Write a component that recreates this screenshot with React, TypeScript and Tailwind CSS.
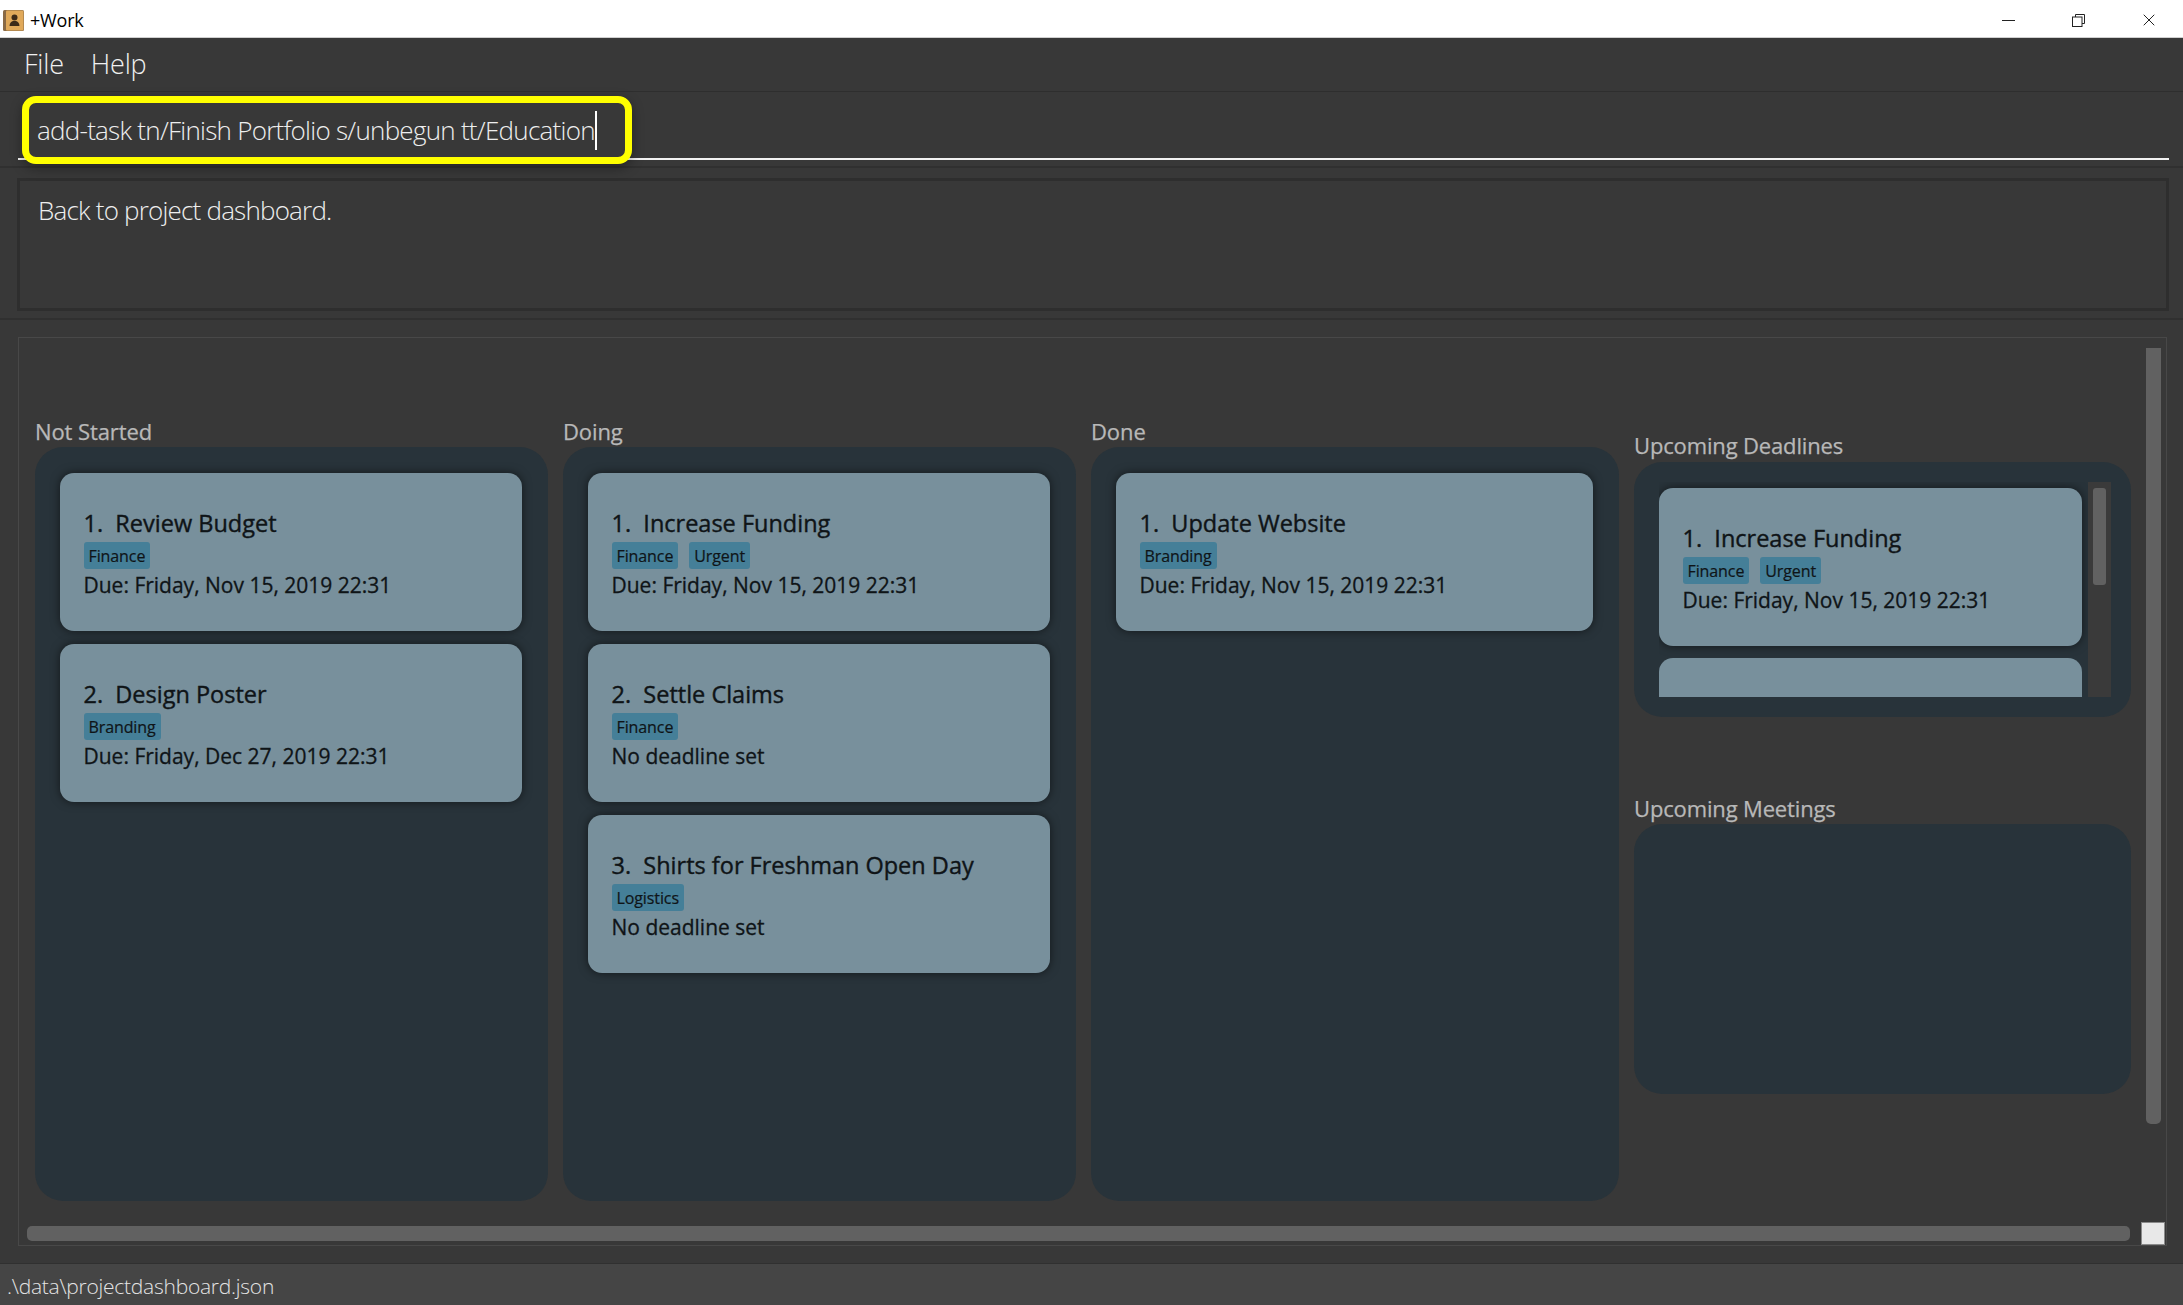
import { X } from 'lucide-react';

type Task = { title: string; tags: string[]; due: string };

const notStarted: Task[] = [
  { title: '1.  Review Budget', tags: ['Finance'], due: 'Due: Friday, Nov 15, 2019 22:31' },
  { title: '2.  Design Poster', tags: ['Branding'], due: 'Due: Friday, Dec 27, 2019 22:31' },
];

const doing: Task[] = [
  { title: '1.  Increase Funding', tags: ['Finance', 'Urgent'], due: 'Due: Friday, Nov 15, 2019 22:31' },
  { title: '2.  Settle Claims', tags: ['Finance'], due: 'No deadline set' },
  { title: '3.  Shirts for Freshman Open Day', tags: ['Logistics'], due: 'No deadline set' },
];

const done: Task[] = [
  { title: '1.  Update Website', tags: ['Branding'], due: 'Due: Friday, Nov 15, 2019 22:31' },
];

function TaskCard({ task }: { task: Task }) {
  return (
    <div className="h-[158px] shrink-0 rounded-[14px] bg-[#78909c] pl-[23.5px] pt-[34px] text-[#0f1417] shadow-[0_0_10px_rgba(0,0,0,0.55)]">
      <div className="h-8 whitespace-pre text-[23.5px] leading-8 font-medium [-webkit-text-stroke:0.4px_#0f1417]">{task.title}</div>
      <div className="mt-[3px] flex h-[27px] gap-[11px]">
        {task.tags.map((tag) => (
          <span key={tag} className="flex items-center rounded-[3px] bg-[#457f98] px-[5px] text-[16px] leading-none font-medium tracking-[-0.1px] [-webkit-text-stroke:0.2px_#0f1417]">
            {tag}
          </span>
        ))}
      </div>
      <div className="h-8 whitespace-pre text-[21px] leading-8 font-medium [-webkit-text-stroke:0.3px_#0f1417]">{task.due}</div>
    </div>
  );
}

function TaskColumn({ label, tasks, width }: { label: string; tasks: Task[]; width: string }) {
  return (
    <div className={`${width} shrink-0`}>
      <div className="h-[31px] text-[22px] leading-[30px] font-medium tracking-[-0.1px] text-[#b8b8b8] [-webkit-text-stroke:0.25px_#b8b8b8]">{label}</div>
      <div className="flex h-[754px] flex-col gap-[13px] rounded-[28px] bg-[#28333a] pb-5 pl-[25px] pr-[26px] pt-[26px]">
        {tasks.map((task) => (
          <TaskCard key={task.title} task={task} />
        ))}
      </div>
    </div>
  );
}

function AppIcon() {
  return (
    <svg viewBox="0 0 21 21" className="h-[21px] w-[21px]">
      <rect x="0" y="0" width="21" height="21" rx="1.5" fill="#8a6a45" />
      <rect x="3" y="0.5" width="17.5" height="20" rx="1" fill="#e0a95a" />
      <circle cx="11.5" cy="7.5" r="3" fill="#3c2a18" />
      <path d="M6.5 16c0-3 2-4.5 3.5-5h3c1.5.5 3.5 2 3.5 5z" fill="#3c2a18" />
    </svg>
  );
}

export default function App() {
  return (
    <div className="flex h-[1305px] w-[2183px] flex-col overflow-hidden bg-[#383838] font-['Open_Sans',sans-serif]">
      {/* window title bar */}
      <div className="flex h-[38px] shrink-0 items-center border-b border-[#d0d0d0] bg-white pl-[3px] pt-[4px] text-black">
        <AppIcon />
        <span className="ml-[6px] text-[18px] tracking-[-0.2px]">+Work</span>
        <div className="ml-auto flex items-center pb-[1px] text-[#222]">
          <svg viewBox="0 0 13 13" className="mr-[57px] h-[13px] w-[13px]">
            <path d="M0 6.5h13" stroke="currentColor" strokeWidth="1" />
          </svg>
          <svg viewBox="0 0 13 13" className="mr-[54px] h-[13px] w-[13px]" fill="none" stroke="currentColor">
            <path d="M3.5 3V.5h9v9H10" />
            <rect x="0.5" y="3" width="9.5" height="9.5" fill="#fff" />
          </svg>
          <X className="mr-[24px] h-[20px] w-[20px]" strokeWidth={1.2} />
        </div>
      </div>

      {/* menu */}
      <div className="flex h-[54px] shrink-0 items-center gap-[27px] border-b border-[#2e2e2e] pl-[24px] text-[27px] font-light tracking-[-0.2px] text-[#f0f0f0]">
        <span>File</span>
        <span>Help</span>
      </div>

      {/* command box */}
      <div className="relative h-[76px] shrink-0 border-b-2 border-[#303030] pl-[18px] pr-[14px]">
        <div className="flex h-[68px] items-center border-b-2 border-[#f2f2f2] pl-[19px] pt-[10px] text-[26px] font-light tracking-[-0.74px] text-[#eeeeee]">
          <span className="whitespace-pre">add-task tn/Finish Portfolio s/unbegun tt/Education</span>
          <span className="h-[39px] w-[2px] bg-white" />
        </div>
        <div className="absolute left-[22px] top-[4px] h-[68px] w-[610px] rounded-[14px] border-[7px] border-[#ffff00] shadow-[0_4px_12px_rgba(0,0,0,0.35)]" />
      </div>

      {/* result display */}
      <div className="h-[152px] shrink-0 border-b-2 border-[#303030] pb-2 pl-[17px] pr-[14px] pt-[10px]">
        <div className="h-[133px] border-[3px] border-[#2e2e2e] pl-[18px] pt-[9px] text-[26px] leading-10 font-light tracking-[-0.8px] text-[#eeeeee]">
          Back to project dashboard.
        </div>
      </div>

      {/* dashboard */}
      <div className="min-h-0 flex-1 pb-[17px] pl-[18px] pr-4 pt-[17px]">
        <div className="flex h-full flex-col border border-[#484848]">
          <div className="flex min-h-0 flex-1">
            <div className="flex flex-1 gap-[15px] pl-4 pt-[78px]">
              <TaskColumn label="Not Started" tasks={notStarted} width="w-[513px]" />
              <TaskColumn label="Doing" tasks={doing} width="w-[513px]" />
              <TaskColumn label="Done" tasks={done} width="w-[528px]" />
              <div className="w-[497px] shrink-0 pt-[14px]">
                <div className="h-[32px] text-[22px] leading-[30px] font-medium tracking-[-0.15px] text-[#b8b8b8] [-webkit-text-stroke:0.25px_#b8b8b8]">Upcoming Deadlines</div>
                <div className="h-[255px] rounded-[28px] bg-[#28333a] pl-[25px] pt-5">
                  <div className="flex h-[215px] overflow-hidden">
                    <div className="flex w-[423px] shrink-0 flex-col gap-3 pt-[6px]">
                      <TaskCard task={doing[0]} />
                      <div className="h-[158px] shrink-0 rounded-[14px] bg-[#78909c]" />
                    </div>
                    <div className="ml-[6px] w-[23px] bg-[#3a3a3a] px-[5px] pt-[6px]">
                      <div className="h-[97px] rounded-[3px] bg-[#616161]" />
                    </div>
                  </div>
                </div>
                <div className="mt-[76px] h-[31px] text-[22px] leading-[30px] font-medium tracking-[-0.15px] text-[#b8b8b8] [-webkit-text-stroke:0.25px_#b8b8b8]">Upcoming Meetings</div>
                <div className="h-[270px] rounded-[28px] bg-[#28333a]" />
              </div>
            </div>
            <div className="mr-[5px] ml-[10px] mt-[10px] h-[776px] w-[15px] shrink-0 rounded-b-[5px] bg-[#616161]" />
          </div>
          <div className="flex h-[24px] shrink-0 items-center pl-2 pr-[1px]">
            <div className="h-[15px] w-[2103px] rounded-[5px] bg-[#616161]" />
            <div className="ml-auto h-[23px] w-[24px] border border-[#8a8a8a] bg-[#e8e8e8]" />
          </div>
        </div>
      </div>

      {/* status bar */}
      <div className="flex h-[42px] shrink-0 items-center border-t border-[#303030] bg-[#454545] pl-[7px] pt-[5px] text-[21px] font-light tracking-[-0.25px] text-[#e4e4e4]">
        .\data\projectdashboard.json
      </div>
    </div>
  );
}
